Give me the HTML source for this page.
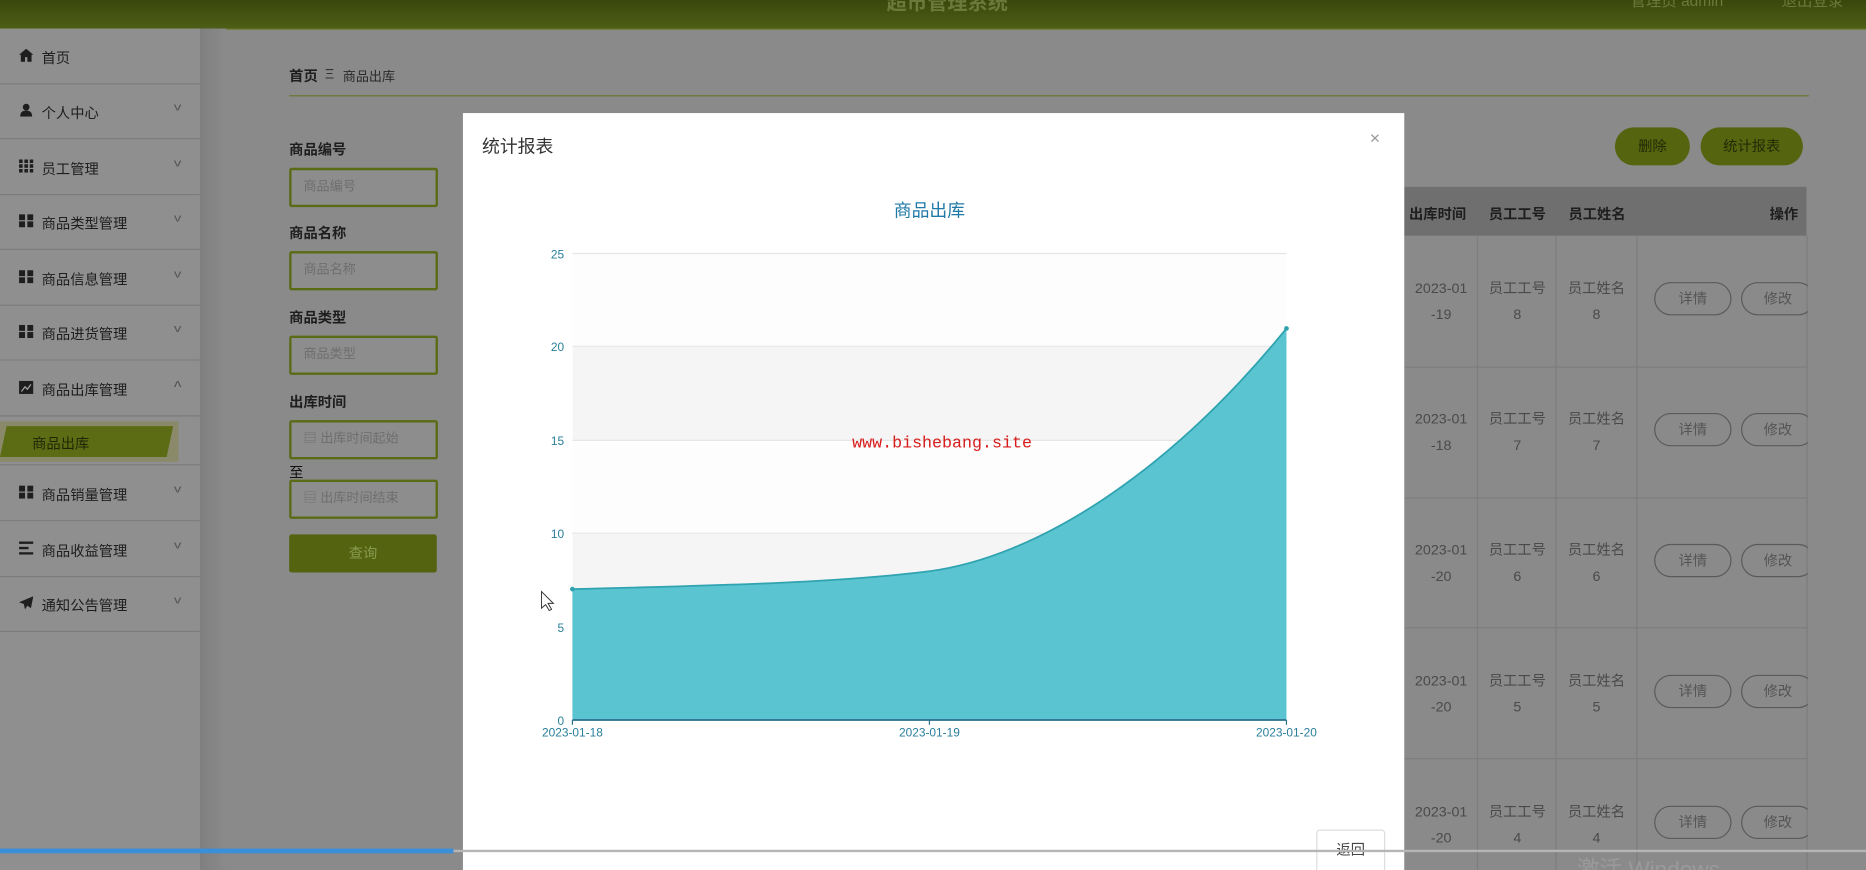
<!DOCTYPE html>
<html><head><meta charset="utf-8"><style>
html,body{margin:0;padding:0;width:1866px;height:870px;overflow:hidden;background:#8b8b8b}
#w{position:absolute;left:0;top:0;width:1568px;height:731px;transform:scale(1.19005,1.19015);transform-origin:0 0;font-family:"Liberation Sans","Noto Sans CJK SC",sans-serif;overflow:hidden;background:#8a8a8a}
.a{position:absolute;white-space:nowrap}
.top{left:0;top:0;width:1568px;height:24px;background:linear-gradient(#3a470c,#4d5e16);border-bottom:1px solid #6b7a2a}
.side{left:0;top:24px;width:168px;height:707px;background:#8f8f8f;border-right:2px solid #7f7f7f}
.shade{left:170px;top:24px;width:20px;height:707px;background:linear-gradient(90deg,#808080,#8a8a8a)}
.mi{position:absolute;left:0;width:168px;height:46px;border-bottom:1px solid #7c7c7c;font-size:12px;color:#1e1e1e}
.mi .t{position:absolute;left:35px;top:16px}
.mi .ic{position:absolute;left:16px;top:17px;width:12px;height:11px}
.mi .ch{position:absolute;left:147px;top:15px;font-size:9px;color:#555;transform:scaleX(1.4)}
.lbl{font-size:12px;font-weight:bold;color:#1e1e1e}
.inp{position:absolute;left:243px;width:121px;height:29px;border:2px solid #5a6b16;border-radius:2px;background:#8d8d8d;font-size:11px;color:#6e6e6e;line-height:29px}
.pill{position:absolute;height:32px;border-radius:16px;background:#55640f;color:#232a06;font-size:12px;text-align:center;line-height:32px}
.th{font-size:12px;font-weight:bold;color:#1e1e1e}
.cell{position:absolute;font-size:12px;color:#4a4a4a;text-align:center;line-height:22px}
.ob{position:absolute;height:26px;border:1px solid #5a5a5a;border-radius:14px;font-size:12px;color:#555;text-align:center;line-height:26px}
.clip{position:absolute;left:1376px;top:198px;width:143px;height:533px;overflow:hidden}
</style></head><body><div id="w">
<div class="a top"></div>
<div class="a" style="left:745px;top:-12px;font-size:17px;color:#6b7a3a;font-weight:bold">超市管理系统</div>
<div class="a" style="left:1370px;top:-10px;font-size:13px;color:#6b7a3a">管理员 admin</div>
<div class="a" style="left:1497px;top:-10px;font-size:13px;color:#6b7a3a">退出登录</div>

<div class="a side">
<div class="mi" style="top:0"><svg class="ic" viewBox="0 0 12 11"><path d="M6 0L0 5h1.5v6h3.5V7h2v4h3.5V5H12z" fill="#1e1e1e"/></svg><span class="t" style="top:16px">首页</span></div>
<div class="mi" style="top:46px"><svg class="ic" viewBox="0 0 12 11"><circle cx="6" cy="3" r="2.8" fill="#1e1e1e"/><path d="M1 11c0-4 2-5 5-5s5 1 5 5z" fill="#1e1e1e"/></svg><span class="t">个人中心</span><span class="ch">v</span></div>
<div class="mi" style="top:93px"><svg class="ic" viewBox="0 0 12 11"><g fill="#1e1e1e"><rect x="0" y="0" width="3" height="3"/><rect x="4.5" y="0" width="3" height="3"/><rect x="9" y="0" width="3" height="3"/><rect x="0" y="4" width="3" height="3"/><rect x="4.5" y="4" width="3" height="3"/><rect x="9" y="4" width="3" height="3"/><rect x="0" y="8" width="3" height="3"/><rect x="4.5" y="8" width="3" height="3"/><rect x="9" y="8" width="3" height="3"/></g></svg><span class="t">员工管理</span><span class="ch">v</span></div>
<div class="mi" style="top:139px"><svg class="ic" viewBox="0 0 12 11"><g fill="#1e1e1e"><rect x="0" y="0" width="5" height="5"/><rect x="7" y="0" width="5" height="5"/><rect x="0" y="6" width="5" height="5"/><rect x="7" y="6" width="5" height="5"/></g></svg><span class="t">商品类型管理</span><span class="ch">v</span></div>
<div class="mi" style="top:186px"><svg class="ic" viewBox="0 0 12 11"><g fill="#1e1e1e"><rect x="0" y="0" width="5" height="5"/><rect x="7" y="0" width="5" height="5"/><rect x="0" y="6" width="5" height="5"/><rect x="7" y="6" width="5" height="5"/></g></svg><span class="t">商品信息管理</span><span class="ch">v</span></div>
<div class="mi" style="top:232px"><svg class="ic" viewBox="0 0 12 11"><g fill="#1e1e1e"><rect x="0" y="0" width="5" height="5"/><rect x="7" y="0" width="5" height="5"/><rect x="0" y="6" width="5" height="5"/><rect x="7" y="6" width="5" height="5"/></g></svg><span class="t">商品进货管理</span><span class="ch">v</span></div>
<div class="mi" style="top:279px"><svg class="ic" viewBox="0 0 12 11"><rect width="12" height="11" fill="#1e1e1e"/><path d="M2 9l3-4 2 2 3-4" stroke="#aaa" fill="none"/></svg><span class="t">商品出库管理</span><span class="ch" style="transform:scaleX(1.4) rotate(180deg)">v</span></div>
<div class="a" style="left:0;top:330px;width:150px;height:34px;background:#8a8a6a"></div>
<div class="a" style="left:0;top:334px;width:140px;height:26px;background:#5c6c14;transform:skewX(-12deg);transform-origin:0 100%"></div>
<div class="a" style="left:27px;top:340px;font-size:12px;color:#1e2606">商品出库</div>
<div class="a" style="left:0;top:366px;width:168px;border-top:1px solid #7c7c7c"></div>
<div class="mi" style="top:367px"><svg class="ic" viewBox="0 0 12 11"><g fill="#1e1e1e"><rect x="0" y="0" width="5" height="5"/><rect x="7" y="0" width="5" height="5"/><rect x="0" y="6" width="5" height="5"/><rect x="7" y="6" width="5" height="5"/></g></svg><span class="t">商品销量管理</span><span class="ch">v</span></div>
<div class="mi" style="top:414px"><svg class="ic" viewBox="0 0 12 11"><g fill="#1e1e1e"><rect y="0" width="12" height="2"/><rect y="4.5" width="8" height="2"/><rect y="9" width="12" height="2"/></g></svg><span class="t">商品收益管理</span><span class="ch">v</span></div>
<div class="mi" style="top:460px"><svg class="ic" viewBox="0 0 12 11"><path d="M12 0L0 5l4 1.5L5 11l2-3 3 2z" fill="#1e1e1e"/></svg><span class="t">通知公告管理</span><span class="ch">v</span></div>
</div>
<div class="a shade"></div>

<div class="a" style="left:243px;top:55px;font-size:12px;font-weight:bold;color:#1e1e1e">首页</div>
<div class="a" style="left:273px;top:55px;font-size:12px;color:#333">Ξ</div>
<div class="a" style="left:288px;top:56px;font-size:11px;color:#2a2a2a">商品出库</div>
<div class="a" style="left:243px;top:80px;width:1277px;height:1px;background:#6b7530"></div>

<div class="a lbl" style="left:243px;top:117px">商品编号</div>
<div class="inp" style="top:141px"><span style="margin-left:10px">商品编号</span></div>
<div class="a lbl" style="left:243px;top:187px">商品名称</div>
<div class="inp" style="top:211px"><span style="margin-left:10px">商品名称</span></div>
<div class="a lbl" style="left:243px;top:258px">商品类型</div>
<div class="inp" style="top:282px"><span style="margin-left:10px">商品类型</span></div>
<div class="a lbl" style="left:243px;top:329px">出库时间</div>
<div class="inp" style="top:353px"><span style="margin-left:10px">▤ 出库时间起始</span></div>
<div class="a" style="left:243px;top:388px;font-size:12px;color:#111">至</div>
<div class="inp" style="top:403px"><span style="margin-left:10px">▤ 出库时间结束</span></div>
<div class="a" style="left:243px;top:449px;width:124px;height:32px;background:#536310;border-radius:2px;color:#8a9a50;font-size:12px;text-align:center;line-height:32px">查询</div>

<div class="pill" style="left:1357px;top:107px;width:63px">删除</div>
<div class="pill" style="left:1429px;top:107px;width:86px">统计报表</div>

<div class="a" style="left:1180px;top:157px;width:338px;height:41px;background:#6f6f6f"></div>
<div class="a th" style="left:1184px;top:171px">出库时间</div>
<div class="a th" style="left:1251px;top:171px">员工工号</div>
<div class="a th" style="left:1318px;top:171px">员工姓名</div>
<div class="a th" style="left:1487px;top:171px">操作</div>
<div class="a" style="left:1241px;top:198px;width:1px;height:533px;background:#7d7d7d"></div>
<div class="a" style="left:1307px;top:198px;width:1px;height:533px;background:#7d7d7d"></div>
<div class="a" style="left:1375px;top:198px;width:1px;height:533px;background:#7d7d7d"></div>
<div class="a" style="left:1518px;top:198px;width:1px;height:533px;background:#7d7d7d"></div>

<div class="a" style="left:1180px;top:308px;width:338px;height:1px;background:#7d7d7d"></div>
<div class="a" style="left:1180px;top:418px;width:338px;height:1px;background:#7d7d7d"></div>
<div class="a" style="left:1180px;top:527px;width:338px;height:1px;background:#7d7d7d"></div>
<div class="a" style="left:1180px;top:637px;width:338px;height:1px;background:#7d7d7d"></div>

<div class="cell" style="left:1180px;top:231px;width:62px">2023-01<br>-19</div>
<div class="cell" style="left:1242px;top:231px;width:66px">员工工号<br>8</div>
<div class="cell" style="left:1308px;top:231px;width:67px">员工姓名<br>8</div>
<div class="cell" style="left:1180px;top:341px;width:62px">2023-01<br>-18</div>
<div class="cell" style="left:1242px;top:341px;width:66px">员工工号<br>7</div>
<div class="cell" style="left:1308px;top:341px;width:67px">员工姓名<br>7</div>
<div class="cell" style="left:1180px;top:451px;width:62px">2023-01<br>-20</div>
<div class="cell" style="left:1242px;top:451px;width:66px">员工工号<br>6</div>
<div class="cell" style="left:1308px;top:451px;width:67px">员工姓名<br>6</div>
<div class="cell" style="left:1180px;top:561px;width:62px">2023-01<br>-20</div>
<div class="cell" style="left:1242px;top:561px;width:66px">员工工号<br>5</div>
<div class="cell" style="left:1308px;top:561px;width:67px">员工姓名<br>5</div>
<div class="cell" style="left:1180px;top:671px;width:62px">2023-01<br>-20</div>
<div class="cell" style="left:1242px;top:671px;width:66px">员工工号<br>4</div>
<div class="cell" style="left:1308px;top:671px;width:67px">员工姓名<br>4</div>

<div class="clip">
<div class="ob" style="left:14px;top:39px;width:63px">详情</div><div class="ob" style="left:87px;top:39px;width:60px">修改</div>
<div class="ob" style="left:14px;top:149px;width:63px">详情</div><div class="ob" style="left:87px;top:149px;width:60px">修改</div>
<div class="ob" style="left:14px;top:259px;width:63px">详情</div><div class="ob" style="left:87px;top:259px;width:60px">修改</div>
<div class="ob" style="left:14px;top:369px;width:63px">详情</div><div class="ob" style="left:87px;top:369px;width:60px">修改</div>
<div class="ob" style="left:14px;top:479px;width:63px">详情</div><div class="ob" style="left:87px;top:479px;width:60px">修改</div>
</div>

<!-- modal -->
<div class="a" style="left:389px;top:95px;width:791px;height:640px;background:#fff"></div>
<div class="a" style="left:405px;top:112px;font-size:15px;color:#333">统计报表</div>
<div class="a" style="left:1151px;top:108px;font-size:15px;color:#999">×</div>
<svg class="a" style="left:389px;top:95px" width="791" height="640" viewBox="389 95 791 640">
<rect x="481" y="213" width="600" height="78" fill="#fdfdfd"/>
<rect x="481" y="291" width="600" height="79" fill="#f5f5f5"/>
<rect x="481" y="370" width="600" height="78" fill="#fdfdfd"/>
<rect x="481" y="448" width="600" height="79" fill="#f5f5f5"/>
<g stroke="#e6e6e6"><line x1="481" y1="213" x2="1081" y2="213"/><line x1="481" y1="291" x2="1081" y2="291"/><line x1="481" y1="370" x2="1081" y2="370"/><line x1="481" y1="448" x2="1081" y2="448"/><line x1="481" y1="527" x2="1081" y2="527"/></g>
<path d="M481,495 C600,492 700,490 781,480 C870,468 980,400 1081,276 L1081,605 L481,605Z" fill="#5bc4d1"/>
<path d="M481,495 C600,492 700,490 781,480 C870,468 980,400 1081,276" fill="none" stroke="#2fa3b0" stroke-width="1.5"/>
<circle cx="481" cy="495" r="2" fill="#2fa3b0"/><circle cx="1081" cy="276" r="2" fill="#2fa3b0"/>
<line x1="481" y1="605" x2="1081" y2="605" stroke="#2a6f8f" stroke-width="1.5"/>
<g stroke="#2a6f8f"><line x1="481" y1="605" x2="481" y2="609"/><line x1="781" y1="605" x2="781" y2="609"/><line x1="1081" y1="605" x2="1081" y2="609"/></g>
<g font-family="Liberation Sans,sans-serif" font-size="10" fill="#2a7f9a" text-anchor="end"><text x="474" y="217">25</text><text x="474" y="295">20</text><text x="474" y="374">15</text><text x="474" y="452">10</text><text x="474" y="531">5</text><text x="474" y="609">0</text></g>
<g font-family="Liberation Sans,sans-serif" font-size="10" fill="#2a7f9a" text-anchor="middle"><text x="481" y="619">2023-01-18</text><text x="781" y="619">2023-01-19</text><text x="1081" y="619">2023-01-20</text></g>
<path d="M455,497 v14 l3.5,-3 l3,5 l2,-1 l-3,-5 h4.5z" fill="#fff" stroke="#333" stroke-width="0.8"/>
</svg>
<div class="a" style="left:751px;top:166px;font-size:15px;color:#1f7aa8">商品出库</div>
<div class="a" style="left:716px;top:365px;font-size:14px;color:#d81c1c;font-family:'Liberation Mono',monospace">www.bishebang.site</div>
<div class="a" style="left:1106px;top:697px;width:56px;height:34px;border:1px solid #ddd;border-radius:3px;font-size:12px;color:#444;text-align:center;line-height:32px;background:#fff">返回</div>

<div class="a" style="left:0;top:714px;width:1568px;height:2px;background:#b5b5b5"></div>
<div class="a" style="left:0;top:713px;width:381px;height:4px;background:#3b8fd9"></div>
<div class="a" style="left:1325px;top:716px;font-size:19px;color:#9a9a9a">激活 Windows</div>
</div></body></html>
